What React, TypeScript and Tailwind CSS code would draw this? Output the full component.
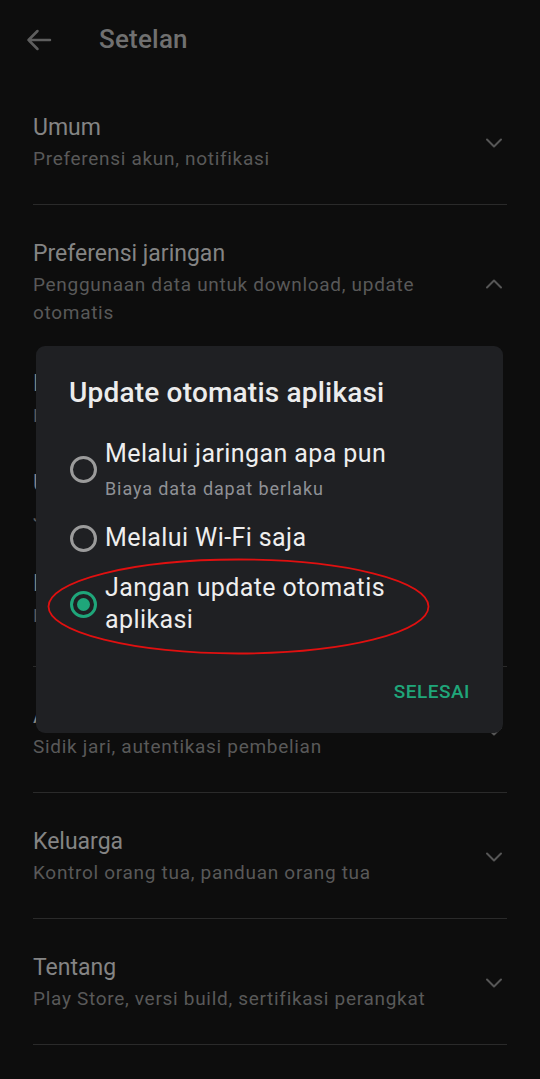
import React from "react";

const font = { fontFamily: "Roboto, 'Noto Sans', Arial, sans-serif" };

function Chevron({ up = false }: { up?: boolean }) {
  return (
    <svg width="18" height="11" viewBox="0 0 18 11" className="shrink-0">
      <path
        d={up ? "M2 9.5 L9 2.5 L16 9.5" : "M2 1.5 L9 8.5 L16 1.5"}
        fill="none"
        stroke="#565656"
        strokeWidth="2"
        strokeLinecap="round"
        strokeLinejoin="round"
      />
    </svg>
  );
}

function Section({ title, sub }: { title: string; sub: string }) {
  return (
    <div className="pt-[34px] pb-[31px]">
      <div className="flex items-center justify-between">
        <div className="flex flex-col pr-[40px]">
          <div className="text-[23px] leading-[30px] text-[#848484]">{title}</div>
          <div className="mt-[2px] text-[19px] leading-[28px] text-[#595959] tracking-[0.7px]">{sub}</div>
        </div>
        <div className="mr-[4px]">
          <Chevron />
        </div>
      </div>
    </div>
  );
}

function SubItem({ title, sub, first = false }: { title: string; sub: string; first?: boolean }) {
  return (
    <div className={first ? "mt-[42px]" : "mt-[39px]"}>
      <div className="text-[23px] leading-[30px] text-[#848484]">{title}</div>
      <div className="mt-[3px] text-[19px] leading-[28px] text-[#595959] tracking-[0.7px]">{sub}</div>
    </div>
  );
}

function Divider() {
  return <div className="h-px bg-[#2a2a2a]" />;
}

function Radio({ checked = false }: { checked?: boolean }) {
  if (checked) {
    return (
      <div className="w-[27px] h-[27px] shrink-0 rounded-full border-[3px] border-[#1fa67a] flex items-center justify-center">
        <div className="w-[13px] h-[13px] rounded-full bg-[#1fa67a]" />
      </div>
    );
  }
  return <div className="w-[27px] h-[27px] shrink-0 rounded-full border-[3px] border-[#9b9b9b]" />;
}

export default function App() {
  return (
    <div className="relative w-[540px] h-[1079px] overflow-hidden bg-[#0d0d0d]" style={font}>
      {/* Header */}
      <div className="h-[79px] flex items-center">
        <svg width="26" height="22" viewBox="0 0 26 22" className="ml-[26px]">
          <path
            d="M24 11 H2.5 M11.5 2 L2.5 11 L11.5 20"
            fill="none"
            stroke="#5e5e5e"
            strokeWidth="2.5"
            strokeLinecap="round"
            strokeLinejoin="round"
          />
        </svg>
        <div className="ml-[47px] text-[26px] text-[#707070] font-medium tracking-[0.2px]">Setelan</div>
      </div>

      <div className="mx-[33px]">
        <Section title="Umum" sub="Preferensi akun, notifikasi" />
        <Divider />
        <div className="pt-[34px] pb-[36px]">
          <div className="flex items-center justify-between">
            <div className="flex flex-col pr-[40px]">
              <div className="text-[23px] leading-[30px] text-[#848484]">Preferensi jaringan</div>
              <div className="mt-[2px] text-[19px] leading-[28px] text-[#595959] tracking-[0.7px]">
                Penggunaan data untuk download, update otomatis
              </div>
            </div>
            <div className="mr-[4px]">
              <Chevron up />
            </div>
          </div>
          <SubItem first title="Preferensi download aplikasi" sub="Melalui jaringan apa pun" />
          <SubItem title="Update otomatis aplikasi" sub="Jangan update otomatis aplikasi" />
          <SubItem title="Putar video otomatis" sub="Melalui Wi-Fi saja" />
        </div>
        <Divider />
        <Section title="Autentikasi" sub="Sidik jari, autentikasi pembelian" />
        <Divider />
        <Section title="Keluarga" sub="Kontrol orang tua, panduan orang tua" />
        <Divider />
        <Section title="Tentang" sub="Play Store, versi build, sertifikasi perangkat" />
        <Divider />
      </div>

      {/* Dialog */}
      <div className="absolute left-[36px] top-[346px] w-[467px] h-[387px] rounded-[9px] bg-[#1f2023] flex flex-col">
        <div className="pl-[33px] pt-[30px] text-[28px] leading-[34px] font-medium text-[#ececec] tracking-[0.2px]">
          Update otomatis aplikasi
        </div>

        <div className="mt-[28px] pl-[34px] flex items-center">
          <Radio />
          <div className="ml-[8px] flex flex-col">
            <div className="text-[25px] leading-[32px] text-[#eeeeee] tracking-[0.4px]">Melalui jaringan apa pun</div>
            <div className="mt-[7px] text-[18px] leading-[24px] text-[#8f9196] tracking-[0.9px]">Biaya data dapat berlaku</div>
          </div>
        </div>

        <div className="mt-[21px] pl-[34px] flex items-center">
          <Radio />
          <div className="ml-[8px] text-[25px] leading-[32px] text-[#eeeeee] tracking-[0.4px]">Melalui Wi-Fi saja</div>
        </div>

        <div className="mt-[18px] pl-[34px] flex items-center">
          <Radio checked />
          <div className="ml-[8px] text-[25px] leading-[32px] text-[#eeeeee] tracking-[0.4px] w-[310px]">
            Jangan update otomatis aplikasi
          </div>
        </div>

        <div className="mt-auto mb-[29px] pr-[33px] flex justify-end">
          <div className="text-[19px] leading-[24px] font-medium text-[#1fa67a] tracking-[0.5px]">SELESAI</div>
        </div>
      </div>

      {/* Red annotation ellipse */}
      <svg
        className="absolute left-[46px] top-[557px]"
        width="385"
        height="99"
        viewBox="0 0 385 99"
      >
        <ellipse cx="192.5" cy="49.5" rx="190" ry="47" fill="none" stroke="#e01010" strokeWidth="1.8" />
      </svg>
    </div>
  );
}
